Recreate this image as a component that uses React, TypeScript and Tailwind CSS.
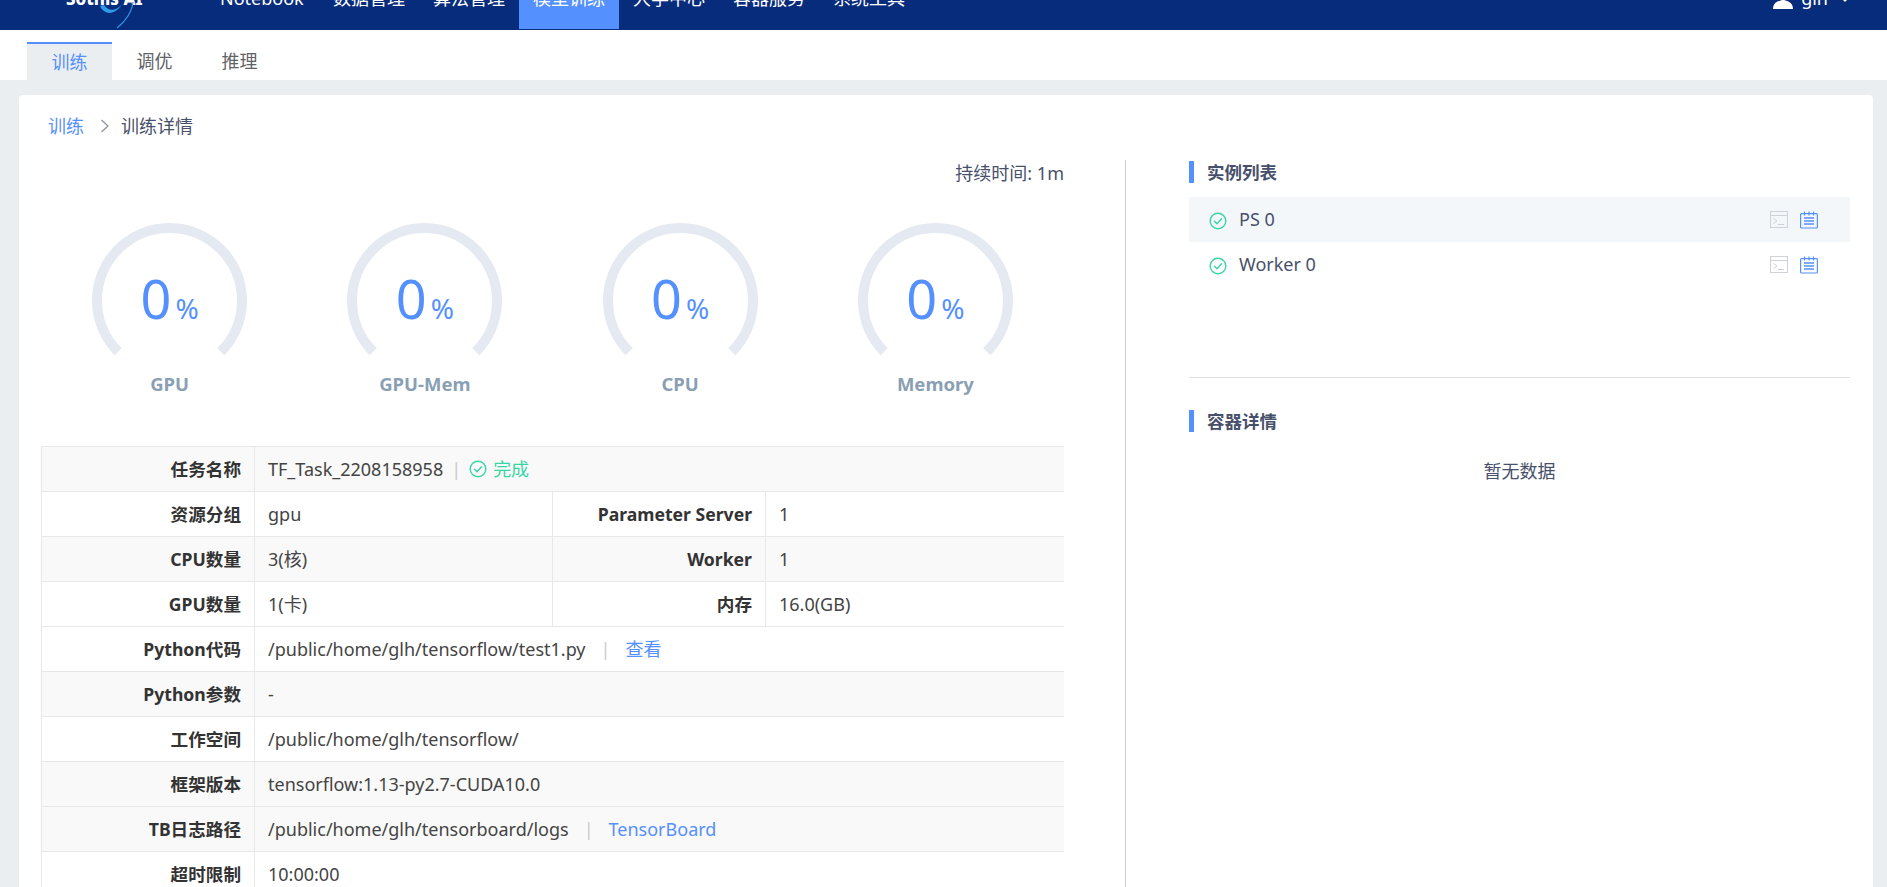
const navItems = ['数据管理', '算法管理', '模型训练', '大学中心', '容器服务', '系统工具'];

const gauges = ['GPU', 'GPU-Mem', 'CPU', 'Memory'];

const Gauge = ({ label }: { label: string }) => (
  <div className="flex flex-col items-center">
    <div className="relative h-[155px] w-[155px]">
      <svg width="155" height="155" viewBox="0 0 155 155">
        <path d="M26.2 128.8 A72.5 72.5 0 1 1 128.8 128.8" fill="none" stroke="#e4e9f2" strokeWidth="10" />
      </svg>
      <div className="absolute inset-0 flex items-baseline justify-center pt-[35px] text-[#5590ff]">
        <span className="text-[54px] leading-[80px]">0</span>
        <span className="ml-[4px] text-[28px]">%</span>
      </div>
    </div>
    <div className="-mt-[6px] text-[18.5px] leading-6 font-bold text-[#8a9fb4]">{label}</div>
  </div>
);

const CheckCircle = ({ size = 18 }: { size?: number }) => (
  <svg width={size} height={size} viewBox="0 0 18 18" fill="none" stroke="#38d6a5" strokeWidth="1.4">
    <circle cx="9" cy="9" r="7.8" />
    <path d="M5.4 9.2 L8 11.8 L12.6 6.8" strokeLinecap="round" strokeLinejoin="round" />
  </svg>
);

const TerminalIcon = () => (
  <svg width="18" height="18" viewBox="0 0 18 18" fill="none" stroke="#cfd2d6" strokeWidth="1">
    <rect x="0.5" y="0.5" width="17" height="16" />
    <path d="M0.5 4.5 H17.5" />
    <path d="M3.5 7.5 L7 10 L3.5 12.5" />
    <path d="M8 13.5 H14" />
  </svg>
);

const NoteIcon = () => (
  <svg width="18" height="18" viewBox="0 0 18 18" fill="none" stroke="#5590ff" strokeWidth="1.2">
    <rect x="0.6" y="2.6" width="16.8" height="14.4" rx="1" />
    <path d="M4.5 0.5 V4.5 M9 0.5 V4.5 M13.5 0.5 V4.5" />
    <path d="M4 7 H14 M4 10 H14 M4 13 H14" strokeWidth="1.6" />
  </svg>
);

const SectionTitle = ({ children }: { children: string }) => (
  <div className="flex h-[22px] items-center border-l-[5px] border-[#5590ff] pl-[13px] text-[17.5px] font-bold text-[#47506b]">
    <span className="mt-px">{children}</span>
  </div>
);

const InstanceRow = ({ name, active }: { name: string; active?: boolean }) => (
  <div className={active ? 'flex h-[45px] items-center bg-[#f4f7fa] pl-5 pr-[32px]' : 'flex h-[45px] items-center pl-5 pr-[32px]'}>
    <span className="mt-[3px]">
      <CheckCircle />
    </span>
    <span className="ml-3 text-[18px] text-[#47506b]">{name}</span>
    <span className="ml-auto flex gap-3">
      <TerminalIcon />
      <NoteIcon />
    </span>
  </div>
);

const Label = ({ children }: { children: string }) => (
  <td className="border border-[#e8e8e8] pr-[13px] text-right text-[17.6px] font-bold text-[#333]">{children}</td>
);

const Value = ({ children, span }: { children: React.ReactNode; span?: number }) => (
  <td colSpan={span} className="border border-[#e8e8e8] pl-[13px] text-[18px] text-[#444]">
    {children}
  </td>
);

const Sep = ({ narrow }: { narrow?: boolean }) => (
  <span className={narrow ? 'mx-[8px] text-[#ccc]' : 'mx-[15px] text-[#ccc]'}>|</span>
);

const App = () => (
  <div className="h-screen overflow-hidden bg-[#ebeef1] font-['Noto_Sans','Noto_Sans_CJK_SC',sans-serif]">
    <header className="h-[30px] overflow-hidden bg-[#082c7c] text-white">
      <div className="-mt-[32px] flex h-[61px] items-stretch text-[18px] leading-[61px]">
        <div className="relative w-[205px] pl-[66px] text-[17px] font-extrabold">
          Sothis AI
          <svg className="absolute left-[95px] top-[32px]" width="45" height="30" viewBox="0 0 45 30" fill="none">
            <path d="M5 6 C9 15 20 16 27 4 C22 11 13 12 9 5 Z" fill="#2f9be8" />
            <path d="M38 2 C37 12 30 22 22 28" stroke="#2f9be8" strokeWidth="1.2" />
          </svg>
        </div>
        <div className="w-[114px] pl-[15px]">Notebook</div>
        {navItems.map((item) => (
          <div key={item} className={item === '模型训练' ? 'bg-[#5590ff] px-[14px]' : 'px-[14px]'}>
            {item}
          </div>
        ))}
        <div className="ml-auto flex items-center pr-[37px]">
          <svg width="20" height="18" viewBox="0 0 20 18" fill="white" className="mt-[2px]">
            <circle cx="10" cy="5" r="5" />
            <path d="M0 18 C0 11 6 9.5 10 9.5 C14 9.5 20 11 20 18 Z" />
          </svg>
          <span className="ml-2">glh</span>
          <svg width="10" height="6" viewBox="0 0 10 6" fill="none" stroke="white" strokeWidth="1.4" className="ml-[12px]">
            <path d="M1 1 L5 5 L9 1" />
          </svg>
        </div>
      </div>
    </header>

    <div className="flex h-[50px] bg-white pl-[27px] pt-3 text-[18px] text-[#606266]">
      <div className="flex h-[38px] w-[85px] items-center justify-center border-t-2 border-[#5590ff] bg-[#ebeef1] text-[#5590ff]">训练</div>
      <div className="flex h-[38px] w-[85px] items-center justify-center">调优</div>
      <div className="flex h-[38px] w-[85px] items-center justify-center">推理</div>
    </div>

    <main className="ml-[19px] mr-[14px] mt-[15px] rounded-t bg-white">
      <div className="flex items-center pl-[29px] pt-[17px] text-[18px] leading-7 text-[#47506b]">
        <span className="text-[#5590ff]">训练</span>
        <svg width="10" height="16" viewBox="0 0 10 16" fill="none" stroke="#8a8f99" strokeWidth="1.2" className="ml-[16px] mr-[11px]">
          <path d="M1.5 2 L8 8 L1.5 14" />
        </svg>
        <span>训练详情</span>
      </div>

      <div className="mt-5 flex pl-[22px]">
        <div className="w-[1023px] shrink-0">
          <div className="pt-px text-right text-[18px] leading-6 text-[#47506b]">持续时间: 1m</div>
          <div className="mt-[38px] grid grid-cols-4 pl-px pr-px">
            {gauges.map((g) => (
              <Gauge key={g} label={g} />
            ))}
          </div>

          <table className="mt-[50px] w-full table-fixed border-collapse [&_td:last-child]:border-r-0 [&_tr]:h-[45px]">
            <colgroup>
              <col className="w-[213px]" />
              <col className="w-[298px]" />
              <col className="w-[213px]" />
              <col />
            </colgroup>
            <tbody>
              <tr className="bg-[#f9f9f9]">
                <Label>任务名称</Label>
                <Value span={3}>
                  <span className="inline-flex items-center">
                    TF_Task_2208158958
                    <Sep narrow />
                    <CheckCircle />
                    <span className="ml-[6px] text-[#38d6a5]">完成</span>
                  </span>
                </Value>
              </tr>
              <tr>
                <Label>资源分组</Label>
                <Value>gpu</Value>
                <Label>Parameter Server</Label>
                <Value>1</Value>
              </tr>
              <tr className="bg-[#f9f9f9]">
                <Label>CPU数量</Label>
                <Value>3(核)</Value>
                <Label>Worker</Label>
                <Value>1</Value>
              </tr>
              <tr>
                <Label>GPU数量</Label>
                <Value>1(卡)</Value>
                <Label>内存</Label>
                <Value>16.0(GB)</Value>
              </tr>
              <tr>
                <Label>Python代码</Label>
                <Value span={3}>
                  /public/home/glh/tensorflow/test1.py
                  <Sep />
                  <span className="text-[#5590ff]">查看</span>
                </Value>
              </tr>
              <tr className="bg-[#f9f9f9]">
                <Label>Python参数</Label>
                <Value span={3}>-</Value>
              </tr>
              <tr>
                <Label>工作空间</Label>
                <Value span={3}>/public/home/glh/tensorflow/</Value>
              </tr>
              <tr className="bg-[#f9f9f9]">
                <Label>框架版本</Label>
                <Value span={3}>tensorflow:1.13-py2.7-CUDA10.0</Value>
              </tr>
              <tr className="bg-[#f9f9f9]">
                <Label>TB日志路径</Label>
                <Value span={3}>
                  /public/home/glh/tensorboard/logs
                  <Sep />
                  <span className="text-[#5590ff]">TensorBoard</span>
                </Value>
              </tr>
              <tr>
                <Label>超时限制</Label>
                <Value span={3}>10:00:00</Value>
              </tr>
            </tbody>
          </table>
        </div>

        <div className="ml-[61px] w-px shrink-0 bg-[#ccc]" />

        <div className="ml-[63px] w-[661px] shrink-0 pt-px">
          <SectionTitle>实例列表</SectionTitle>
          <div className="mt-[14px]">
            <InstanceRow name="PS 0" active />
            <InstanceRow name="Worker 0" />
          </div>
          <div className="mt-[90px] h-px bg-[#e0e0e0]" />
          <div className="mt-8">
            <SectionTitle>容器详情</SectionTitle>
          </div>
          <div className="mt-[27px] text-center text-[18px] leading-6 text-[#47506b]">暂无数据</div>
        </div>
      </div>
    </main>
  </div>
);

export default App;
